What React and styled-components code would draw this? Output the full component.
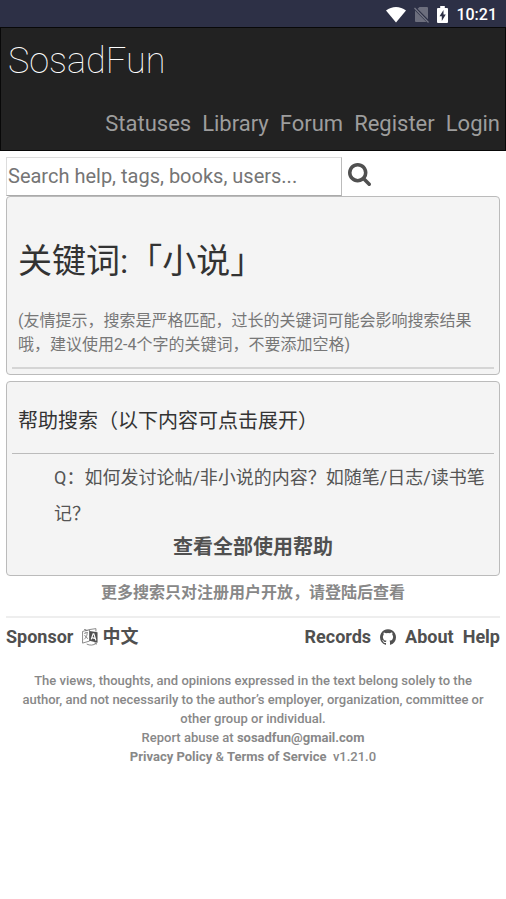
import React from "react";
import styled, { createGlobalStyle } from "styled-components";

const GlobalStyle = createGlobalStyle`
  *, *::before, *::after { box-sizing: border-box; }
  body {
    margin: 0;
    background: #fff;
    color: #555;
    font-family: Roboto, "Noto Sans CJK SC", sans-serif;
    font-size: 18px;
  }
  h1, h2, p { margin: 0; }
  h1, h2 { font-weight: 400; }
  a { color: inherit; text-decoration: none; }
`;

const StatusBar = styled.div`
  display: flex;
  align-items: center;
  justify-content: flex-end;
  gap: 8px;
  height: 27px;
  padding: 1px 9px 0;
  background: #2d3046;
  color: #fff;
  font-size: 16px;
  font-weight: 500;
  svg { display: block; }
`;

const Header = styled.header`
  padding: 8px 5px 8px 7px;
  background: #222;
  border: 1px solid #080808;
`;

const Brand = styled.a`
  display: block;
  color: #fff;
  font-size: 36px;
  font-weight: 100;
  line-height: 50px;
`;

const Nav = styled.nav`
  display: flex;
  justify-content: flex-end;
  gap: 11px;
  margin-top: 20px;
  color: #9d9d9d;
  font-size: 22px;
  line-height: 36px;
`;

const Main = styled.main`
  padding: 6px 6px 0;
`;

const SearchForm = styled.form`
  display: flex;
  align-items: stretch;
  gap: 6px;
  height: 39px;
`;

const SearchInput = styled.input`
  width: 68%;
  padding: 0 1px 2px;
  background: #fff;
  border: 1px solid;
  border-color: #ddd #bbb #aaa #ddd;
  border-radius: 0;
  color: #555;
  font-family: inherit;
  font-size: 20px;
  &::placeholder { color: #757575; opacity: 1; }
`;

const SearchButton = styled.button`
  display: flex;
  align-items: center;
  padding: 0 0 4px;
  border: 0;
  background: none;
  color: #505050;
`;

const Card = styled.section`
  margin-bottom: 6px;
  padding: 0 5px 5px;
  background: #f4f4f4;
  border: 1px solid #bbb;
  border-radius: 4px;
`;

const Title = styled.h1`
  padding: 38px 6px 0;
  color: #333;
  font-size: 34px;
  line-height: 52px;
`;

const Hint = styled.p`
  padding: 22px 6px 10px;
  border-bottom: 2px solid #d5d5d5;
  color: #777;
  font-size: 16px;
  line-height: 24px;
`;

const SectionTitle = styled.h2`
  padding: 19px 6px 12px;
  border-bottom: 1px solid #bbb;
  color: #333;
  font-size: 20px;
  line-height: 40px;
`;

const Question = styled.a`
  display: block;
  padding: 6px 6px 0 42px;
  color: #555;
  line-height: 36px;
`;

const MoreLink = styled.a`
  display: block;
  padding-bottom: 8px;
  color: #505050;
  font-size: 20px;
  font-weight: 700;
  line-height: 30px;
  text-align: center;
`;

const Notice = styled.p`
  color: #888;
  font-size: 16px;
  font-weight: 700;
  line-height: 22px;
  text-align: center;
`;

const Footer = styled.footer`
  margin: 12px 6px 0;
  border-top: 2px solid #eee;
`;

const FooterLinks = styled.div`
  display: flex;
  justify-content: space-between;
  padding-top: 5px;
  color: #505050;
  font-weight: 700;
  line-height: 28px;
`;

const LinkGroup = styled.div`
  display: flex;
  align-items: center;
  gap: 9px;
`;

const IconLink = styled.a`
  display: flex;
  align-items: center;
  gap: 4px;
`;

const Legal = styled.div`
  padding: 20px 14px 0;
  color: #888;
  font-size: 13px;
  font-weight: 500;
  line-height: 19px;
  text-align: center;
  a { font-weight: 700; }
`;

const WifiIcon = () => (
  <svg width="20" height="17" viewBox="0 0 20 17" aria-hidden="true">
    <path fill="#fff" d="M0 4.5C5.8-.3 14.2-.3 20 4.5L10 16.5Z" />
  </svg>
);

const NoSimIcon = () => (
  <svg width="15" height="17" viewBox="0 0 15 17" aria-hidden="true">
    <path fill="#6c6e7d" d="M5.500 1H13a1 1 0 0 1 1 1v11.200L3.600 2.800ZM1 4.600 12.500 16H2a1 1 0 0 1-1-1Z" />
    <path stroke="#777987" strokeWidth="1.2" d="m.5 2 14 14.500" />
  </svg>
);

const BatteryIcon = () => (
  <svg width="11" height="17" viewBox="0 0 11 17" aria-hidden="true">
    <path fill="#fff" d="M3.200 0h4.600v2H10a1 1 0 0 1 1 1v13a1 1 0 0 1-1 1H1a1 1 0 0 1-1-1V3a1 1 0 0 1 1-1h2.200Z" />
    <path fill="#2d3046" d="M6.500 4 2.500 10.300h2.300V15l4-6.400H6.500Z" />
  </svg>
);

const SearchIcon = () => (
  <svg width="23" height="23" viewBox="0 0 1664 1664" aria-hidden="true">
    <path fill="currentColor" d="M1152 704q0-185-131.500-316.500T704 256 387.500 387.500 256 704t131.500 316.500T704 1152t316.500-131.500T1152 704zm512 832q0 52-38 90t-90 38q-54 0-90-38l-343-342q-179 124-399 124-143 0-273.500-55.500t-225-150-150-225T0 704t55.500-273.500 150-225 225-150T704 0t273.500 55.500 225 150 150 225T1408 704q0 220-124 399l343 343q37 37 37 90z" />
  </svg>
);

const LanguageIcon = () => (
  <svg width="16" height="18" viewBox="0 0 17 19" aria-hidden="true">
    <path fill="none" stroke="#777" strokeWidth=".9" d="M.6 3.600 8 1.600v12.200L.6 16Zm7.400-2L14.800.6v3M2.300 5.700l4-1M4.200 4v1.200m1.400.3c-.4 3-1.500 5-3.300 6.500m.5-4.600c.8 1.800 2 3 3.600 3.800M5 17c3.300 1.700 7.300 1.500 10-.8m-1.800-.3 2-.1-.1 1.800" />
    <path fill="#505050" d="m2.500 1 5.500 2L16.500 4.500v11.200L8 13.500V3L2.500 2Z" />
    <path fill="none" stroke="#fff" strokeWidth="1.200" d="m9.800 12 2-6h.8l2.200 7.200m-4.300-3 3.200.8" />
  </svg>
);

const GithubIcon = () => (
  <svg width="16" height="16" viewBox="0 0 1536 1500" aria-hidden="true">
    <path fill="currentColor" d="M768 0q209 0 385.500 103T1433 382.500 1536 768q0 251-146.500 451.500T1011 1497q-27 5-40-7t-13-30q0-3 .5-76.500t.5-134.500q0-97-52-142 57-6 102.500-18t94-39 81-66.500 53-105T1258 728q0-119-79-206 37-91-8-204-28-9-81 11t-92 44l-38 24q-93-26-192-26t-192 26q-16-11-42.500-27T450 331.500 365 318q-45 113-8 204-79 87-79 206 0 85 20.500 150t52.500 105 80.500 67 94 39 102.500 18q-39 36-49 103-21 10-45 15t-57 5-65.500-21.500T356 1146q-19-32-48.500-52t-49.500-24l-20-3q-21 0-29 4.500t-5 11.500 9 14 13 12l7 5q22 10 43.500 38t31.500 51l10 23q13 38 44 61.500t67 30 69.500 7 55.500-3.500l23-4q0 38 .5 88.500t.5 54.500q0 18-13 30t-40 7q-232-77-378.500-277.500T0 768q0-209 103-385.500T382.500 103 768 0z" />
  </svg>
);

const navItems = ["Statuses", "Library", "Forum", "Register", "Login"];

export default function App() {
  return (
    <>
      <GlobalStyle />
      <StatusBar>
        <WifiIcon />
        <NoSimIcon />
        <BatteryIcon />
        <span>10:21</span>
      </StatusBar>
      <Header>
        <Brand href="#">SosadFun</Brand>
        <Nav>
          {navItems.map((item) => (
            <a href="#" key={item}>{item}</a>
          ))}
        </Nav>
      </Header>
      <Main>
        <SearchForm role="search" onSubmit={(e) => e.preventDefault()}>
          <SearchInput type="text" aria-label="Search" placeholder="Search help, tags, books, users..." />
          <SearchButton type="submit" aria-label="Search">
            <SearchIcon />
          </SearchButton>
        </SearchForm>
        <Card>
          <Title>关键词:「小说」</Title>
          <Hint>(友情提示，搜索是严格匹配，过长的关键词可能会影响搜索结果哦，建议使用2-4个字的关键词，不要添加空格)</Hint>
        </Card>
        <Card>
          <SectionTitle>帮助搜索（以下内容可点击展开）</SectionTitle>
          <Question href="#">Q：如何发讨论帖/非小说的内容？如随笔/日志/读书笔记？</Question>
          <MoreLink href="#">查看全部使用帮助</MoreLink>
        </Card>
        <Notice>更多搜索只对注册用户开放，请登陆后查看</Notice>
      </Main>
      <Footer>
        <FooterLinks>
          <LinkGroup>
            <a href="#">Sponsor</a>
            <IconLink href="#"><LanguageIcon />中文</IconLink>
          </LinkGroup>
          <LinkGroup>
            <a href="#">Records</a>
            <IconLink href="#" aria-label="GitHub"><GithubIcon /></IconLink>
            <a href="#">About</a>
            <a href="#">Help</a>
          </LinkGroup>
        </FooterLinks>
        <Legal>
          <p>The views, thoughts, and opinions expressed in the text belong solely to the author, and not necessarily to the author’s employer, organization, committee or other group or individual.</p>
          <div>Report abuse at <a href="mailto:sosadfun@gmail.com">sosadfun@gmail.com</a></div>
          <div><a href="#">Privacy Policy</a> &amp; <a href="#">Terms of Service</a>&nbsp; v1.21.0</div>
        </Legal>
      </Footer>
    </>
  );
}
